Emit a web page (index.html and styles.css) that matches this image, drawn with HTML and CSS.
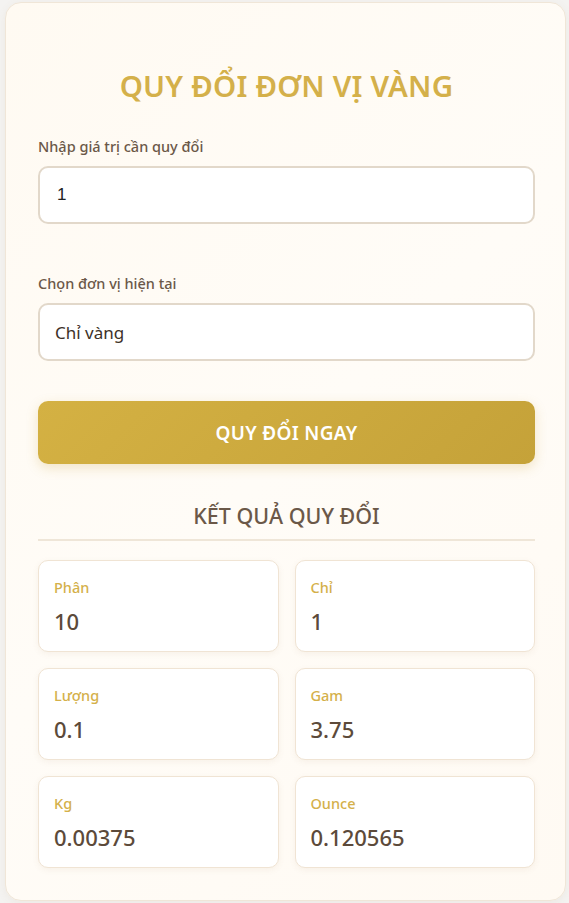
FILE: index.html
```html
<!DOCTYPE html>
<html lang="vi">
<head>
<meta charset="utf-8">
<title>Quy đổi đơn vị vàng</title>
<link rel="stylesheet" href="styles.css">
</head>
<body>
<div class="page">
  <main class="card">
    <h1 class="title">QUY ĐỔI ĐƠN VỊ VÀNG</h1>
    <div class="field">
      <label class="label">Nhập giá trị cần quy đổi</label>
      <div class="input num">1</div>
    </div>
    <div class="field">
      <label class="label">Chọn đơn vị hiện tại</label>
      <div class="input">Chỉ vàng</div>
    </div>
    <button class="btn">QUY ĐỔI NGAY</button>
    <h2 class="subtitle">KẾT QUẢ QUY ĐỔI</h2>
    <div class="grid">
      <div class="item"><div class="item-label">Phân</div><div class="item-value">10</div></div>
      <div class="item"><div class="item-label">Chỉ</div><div class="item-value">1</div></div>
      <div class="item"><div class="item-label">Lượng</div><div class="item-value">0.1</div></div>
      <div class="item"><div class="item-label">Gam</div><div class="item-value">3.75</div></div>
      <div class="item"><div class="item-label">Kg</div><div class="item-value">0.00375</div></div>
      <div class="item"><div class="item-label">Ounce</div><div class="item-value">0.120565</div></div>
    </div>
  </main>
</div>
</body>
</html>
```
FILE: styles.css
```css
* { box-sizing: border-box; }
html, body { margin: 0; padding: 0; }
body {
  background: #f4f3f1;
  font-family: "Noto Sans", "Open Sans", sans-serif;
  color: #5c4a3a;
}
.page {
  padding: 2px 3px 3px 5px;
}
.card {
  background: linear-gradient(135deg, #fffaf2 0%, #fffcf7 50%, #fffaf3 100%);
  border: 1px solid #f0e6d8;
  border-radius: 16px;
  box-shadow: 0 2px 8px rgba(150, 120, 80, 0.08);
  padding: 64px 30px 32px 32px;
  min-height: 898px;
}
.title {
  margin: 0 0 31px;
  text-align: center;
  font-size: 29.5px;
  line-height: 38px;
  font-weight: 600;
  color: #d4b04a;
  letter-spacing: 0.2px;
}
.field { margin-bottom: 49px; }
.field + .field { margin-bottom: 40px; }
.label {
  display: block;
  font-size: 14.5px;
  line-height: 20px;
  font-weight: 500;
  color: #6b5848;
  margin-bottom: 10px;
}
.input {
  height: 58px;
  background: #fff;
  border: 2px solid #e2d8ca;
  border-radius: 10px;
  padding: 0 15px;
  display: flex;
  align-items: center;
  font-size: 17px;
  color: #3d3128;
}
.input.num { font-family: "Liberation Sans", Arial, sans-serif; font-size: 17px; color: #222; padding-left: 17px; }
.btn {
  display: block;
  width: 100%;
  height: 63px;
  border: none;
  border-radius: 10px;
  background: linear-gradient(135deg, #d4b143 0%, #c5a239 100%);
  color: #fff;
  font-family: "Noto Sans", "Open Sans", sans-serif;
  font-size: 19px;
  font-weight: 600;
  letter-spacing: 0.3px;
  box-shadow: 0 4px 12px rgba(200, 160, 60, 0.25);
  margin-bottom: 38px;
}
.subtitle {
  margin: 0;
  text-align: center;
  font-size: 21.5px;
  line-height: 28px;
  font-weight: 500;
  color: #6b5848;
  padding-bottom: 9px;
  border-bottom: 2px solid #efe6d8;
  margin-bottom: 19px;
}
.grid {
  display: grid;
  grid-template-columns: 1fr 1fr;
  column-gap: 16px;
  row-gap: 16px;
}
.item {
  background: #fff;
  border: 1px solid #f0e4d4;
  border-radius: 10px;
  box-shadow: 0 2px 6px rgba(150, 120, 80, 0.08);
  height: 92px;
  padding: 15px 15px 0;
}
.item-label {
  font-size: 14.5px;
  line-height: 22px;
  font-weight: 500;
  color: #d4b04a;
  margin-bottom: 8px;
}
.item-value {
  font-size: 22px;
  line-height: 30px;
  font-weight: 500;
  color: #5c4a3a;
}
```
